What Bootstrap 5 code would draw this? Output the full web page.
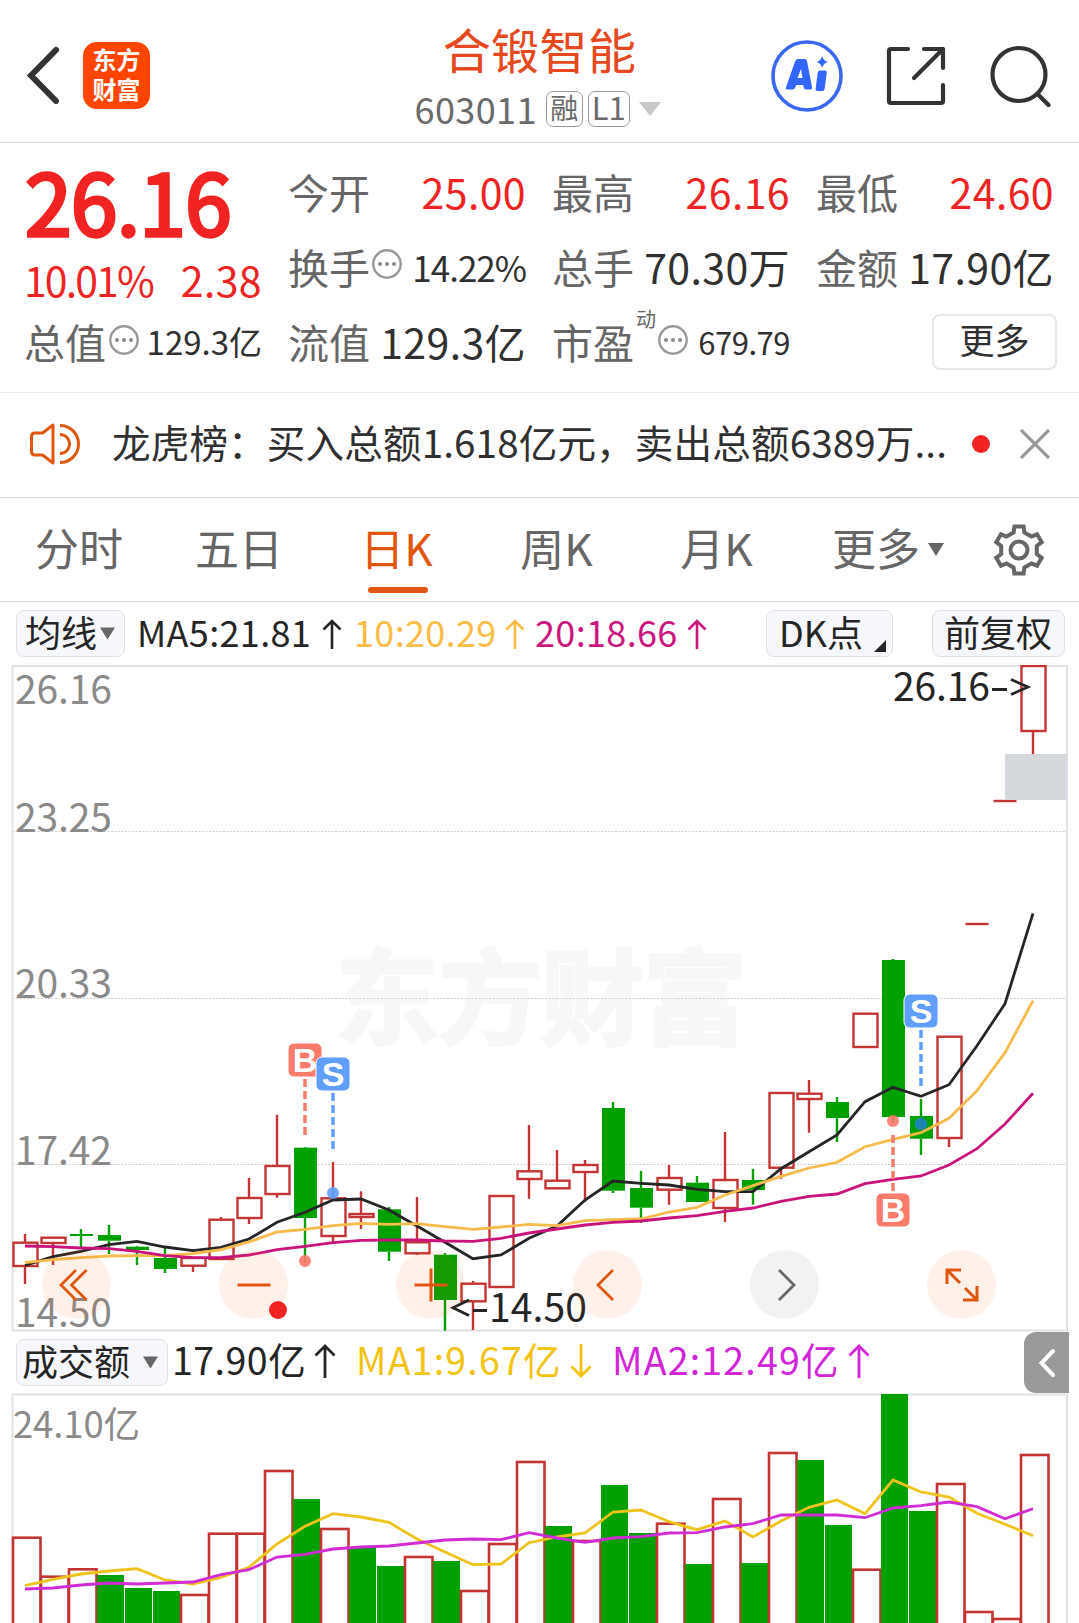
<!DOCTYPE html>
<html lang="zh-CN">
<head>
<meta charset="utf-8">
<meta name="viewport" content="width=device-width, initial-scale=1">
<title>合锻智能 603011</title>
<link rel="stylesheet" href="https://cdn.jsdelivr.net/npm/bootstrap@5.3.0/dist/css/bootstrap.min.css">
<script src="https://cdn.jsdelivr.net/npm/bootstrap@5.3.0/dist/js/bootstrap.bundle.min.js"></script>
<style>
  body { width: 1079px; height: 1623px; overflow: hidden; background: #fff; color: #303030;
         font-family: "Noto Sans CJK SC", "Noto Sans", sans-serif; font-size: 41px; line-height: 1; }
  svg { display: block; flex: none; }
  .up { color: #ee2424; }
  .rule { border-bottom: 1px solid #d8d8d8; }

  .topbar { height: 143px; padding: 0 26px; display: grid; grid-template-columns: 1fr auto 1fr; }
  .logo { width: 67px; height: 67px; border-radius: 14px; background: #ff4500; color: #fff; margin-left: 23px;
          font-size: 24px; font-weight: 700; line-height: 30px; padding-top: 2px; }
  .stock-name { font-size: 48px; line-height: 60px; letter-spacing: .4px; color: #e84820; margin-top: 18px; }
  .code-line { font-size: 36px; line-height: 40px; color: #6a6a6a; margin-top: 11px; }
  .code-no { letter-spacing: .4px; position: relative; top: -1px; }
  .tagbox { border: 1.5px solid #999; border-radius: 7px; height: 36px; font-size: 28px; line-height: 30px; text-align: center; }

  .quote { height: 250px; padding: 11px 25px 0 24px; grid-template-columns: repeat(4, 238px);
           grid-template-rows: repeat(3, 75px); column-gap: 26px; border-bottom: 1px solid #ececec; }
  .cell { display: flex; justify-content: space-between; align-items: center; white-space: nowrap; }
  .lbl { color: #666; display: flex; align-items: center; }
  .price-cell { grid-row: span 2; }
  .price { font-size: 84px; line-height: 92px; letter-spacing: -.8px; -webkit-text-stroke: 3.4px #f22323; color: #f22323; padding-left: 1px; }
  .change { font-size: 41px; line-height: 50px; margin-top: 8px; }
  .pct { letter-spacing: -1.9px; }
  .num { letter-spacing: .4px; }
  .v35 { font-size: 35px; letter-spacing: -1px; } .v33 { font-size: 33px; } .v31 { font-size: 31px; letter-spacing: -.5px; }
  .dyn { font-size: 20px; align-self: flex-start; margin: -12px 5px 0 2px; }
  .more { width: 125px; height: 56px; border: 2px solid #e6e7ea; border-radius: 8px; font-size: 35px; line-height: 46px;
          text-align: center; margin: 0 -3px 0 auto; }

  .news { height: 105px; padding: 0 29px 0 29px; }
  .news svg, .news .dot { position: relative; top: -1px; }
  .news-text { font-size: 38.6px; letter-spacing: .13px; margin: -7px 0 0 31px; width: 840px; white-space: nowrap; }
  .dot { width: 18px; height: 18px; border-radius: 50%; background: #f12323; flex: none; }

  .ktabs { height: 104px; font-size: 44px; color: #666; }
  .ktabs .item { width: 160px; height: 103px; line-height: 99px; text-align: center; display: block; padding-right: 2px; }
  .ktabs .item:nth-child(n+3) { padding-right: 7px; }
  .ktabs .item:last-of-type { padding-right: 2px; }
  .ktabs .on { color: #e2570f; position: relative; }
  .ktabs .on::after { content: ""; position: absolute; left: 48px; bottom: 8px; width: 60px; height: 6px; border-radius: 3px; background: #e2570f; }

  .ind { height: 63px; font-size: 36px; white-space: nowrap; padding: 0 14px 0 16px; color: #252525; }
  .chip { height: 47px; border: 1.5px solid #dfe1e5; border-radius: 8px; background: #f6f7fa; color: #252525;
          font-size: 36px; display: flex; align-items: center; position: relative; top: -.5px; flex: none; }
  .chip span { position: relative; top: -2.5px; }
  .ind .t { position: relative; top: -3px; letter-spacing: .35px; }
  .vol-head { height: 61px; font-size: 37.5px; white-space: nowrap; padding: 0 10px 0 16px; color: #252525; }
  .vol-head .t { position: relative; top: -4px; }
  .vol-head .wide { letter-spacing: 1.2px; }
  .vol-head > svg { position: relative; top: -2px; }
  .pull { width: 45px; height: 61px; border-radius: 12px 0 0 12px; background: #999; }

  .chart { position: relative; height: 667px; }
  .controls { position: absolute; left: 42px; top: 585px; width: 954px; display: flex; justify-content: space-between; }
  .round { width: 69px; height: 69px; border-radius: 50%; background: rgba(255,105,20,.09); display: flex; align-items: center; justify-content: center; position: relative; }
  .round.off { background: #f2f2f2; }
  .round .dot { position: absolute; left: 50px; top: 51px; }
</style>
</head>
<body>

<header class="topbar rule">
  <div class="d-flex align-items-center" style="padding-top:8px">
    <svg width="34" height="60" viewBox="0 0 34 60" fill="none" stroke="#333" stroke-width="6" stroke-linecap="round" stroke-linejoin="miter"><path d="M30 5 5 30.500 30 56"/></svg>
    <div class="logo text-center">东方<br>财富</div>
  </div>
  <div class="text-center" style="width:250px">
    <div class="stock-name">合锻智能</div>
    <div class="code-line d-flex align-items-center">
      <span class="code-no">603011</span>
      <span class="tagbox" style="width:37px;margin-left:9px">融</span>
      <span class="tagbox" style="width:42px;margin-left:5px;font-size:31px">L1</span>
      <svg class="ms-2" width="24" height="16" viewBox="0 0 24 16"><path d="M1 1h22L12 15z" fill="#c9c9c9"/></svg>
    </div>
  </div>
  <div class="d-flex align-items-center justify-content-end" style="padding:9px 2px 0 0">
    <svg width="72" height="72" viewBox="0 0 72 72"><circle cx="36" cy="36" r="34" fill="none" stroke="#3a68f2" stroke-width="3.600"/>
      <path fill="#3366ff" fill-rule="evenodd" d="M26.500 19h7q2 0 2.500 2l5 26q.5 2.500-2 2.500h-4q-2 0-2.300-2l-.4-2.500h-7l-1.200 2.700q-.8 1.800-2.500 1.800h-5q-2.500 0-1.500-2.500l9-25.500q.7-2.500 2.400-2.500zM30 29l-3.500 9h5zM47 30.500h7q2 0 1.700 2l-2 16q-.4 2.500-2.400 2.500h-5q-2 0-1.700-2l2-16q.2-2.500 2.400-2.500zM51 16q1.500 5 6 6-4.500 1-6 6-1-5-5.500-6 4.500-1 5.500-6z"/></svg>
    <svg style="margin-left:43px" width="60" height="60" viewBox="0 0 60 60" fill="none" stroke="#333" stroke-width="4.200" stroke-linecap="round" stroke-linejoin="round"><path d="M22 3H5q-2 0-2 2v50q0 2 2 2h50q2 0 2-2V39M38 3h19v19M57 3 28 32"/></svg>
    <svg style="margin-left:43px" width="62" height="62" viewBox="0 0 62 62" fill="none" stroke="#333" stroke-width="4.200" stroke-linecap="round"><circle cx="30" cy="29.500" r="26.500"/><path d="m48.500 49 11 11"/></svg>
  </div>
</header>

<section class="quote d-grid">
  <div class="price-cell up">
    <div class="price">26.16</div>
    <div class="change d-flex justify-content-between"><span class="pct">10.01%</span><span class="num">2.38</span></div>
  </div>
  <div class="cell"><span class="lbl">今开</span><span class="up num">25.00</span></div>
  <div class="cell"><span class="lbl">最高</span><span class="up num">26.16</span></div>
  <div class="cell"><span class="lbl">最低</span><span class="up num">24.60</span></div>
  <div class="cell"><span class="lbl">换手<svg width="30" height="30" viewBox="0 0 30 30" style="margin:-5px 0 0 2px"><circle cx="15" cy="15" r="13.700" fill="none" stroke="#999" stroke-width="2.400"/><g fill="#8a8a8a"><circle cx="8" cy="15" r="2"/><circle cx="15" cy="15" r="2"/><circle cx="22" cy="15" r="2"/></g></svg></span><span class="v35">14.22%</span></div>
  <div class="cell"><span class="lbl">总手</span><span class="num">70.30万</span></div>
  <div class="cell"><span class="lbl">金额</span><span class="num">17.90亿</span></div>
  <div class="cell"><span class="lbl">总值<svg width="30" height="30" viewBox="0 0 30 30" style="margin:-3px 0 0 3px"><circle cx="15" cy="15" r="13.700" fill="none" stroke="#999" stroke-width="2.400"/><g fill="#8a8a8a"><circle cx="8" cy="15" r="2"/><circle cx="15" cy="15" r="2"/><circle cx="22" cy="15" r="2"/></g></svg></span><span class="v33">129.3亿</span></div>
  <div class="cell"><span class="lbl">流值</span><span class="num">129.3亿</span></div>
  <div class="cell"><span class="lbl">市盈<span class="dyn">动</span><svg width="30" height="30" viewBox="0 0 30 30" style="margin:-3px 0 0 -3px"><circle cx="15" cy="15" r="13.700" fill="none" stroke="#999" stroke-width="2.400"/><g fill="#8a8a8a"><circle cx="8" cy="15" r="2"/><circle cx="15" cy="15" r="2"/><circle cx="22" cy="15" r="2"/></g></svg></span><span class="v31">679.79</span></div>
  <div class="cell"><div class="more">更多</div></div>
</section>

<section class="news rule d-flex align-items-center">
  <svg width="52" height="44" viewBox="0 0 52 44" fill="none" stroke="#e2570f" stroke-width="3"><path d="M24 3v38L13.500 33H6q-3.500 0-3.500-3.500v-15Q2.500 11 6 11h7.500z" stroke-linejoin="round"/><path d="M31 3.500a18.500 18.500 0 0 1 0 37M31 12.500a9.500 9.500 0 0 1 0 19"/></svg>
  <span class="news-text">龙虎榜：买入总额1.618亿元，卖出总额6389万...</span>
  <span class="dot" style="margin-left:20px"></span>
  <svg class="ms-auto" width="30" height="30" viewBox="0 0 30 30" stroke="#999" stroke-width="3.200"><path d="M1 1 29 29M29 1 1 29"/></svg>
</section>

<nav class="ktabs rule d-flex">
  <span class="item">分时</span><span class="item">五日</span><span class="item on">日K</span><span class="item">周K</span><span class="item">月K</span>
  <span class="item d-flex justify-content-center" style="width:178px">更多<svg width="16" height="13" viewBox="0 0 16 13" style="margin:45px 0 0 8px"><path d="M0 0h16L8 13z" fill="#666"/></svg></span>
  <svg id="gear" class="align-self-center" style="margin-left:14px" width="54" height="54" viewBox="-27 -27 54 54" fill="none" stroke="#666" stroke-width="4"><circle r="8.500"/></svg>
</nav>

<div class="ind d-flex align-items-center">
  <div class="chip" style="width:109px;padding-left:8px"><span>均线</span><svg width="15" height="13" viewBox="0 0 16 13" style="margin-left:3px"><path d="M0 0h16L8 13z" fill="#666"/></svg></div>
  <span class="t" style="margin-left:12px;width:185px">MA5:21.81</span>
  <svg width="20" height="32" viewBox="0 0 20 32" fill="none" stroke="#252525" stroke-width="2.600"><path d="M10 31V3M1.500 11.500 10 3l8.500 8.500"/></svg>
  <span class="t" style="margin-left:12px;width:151px;color:#fbbc45">10:20.29</span>
  <svg width="20" height="32" viewBox="0 0 20 32" fill="none" stroke="#fbbc45" stroke-width="2.600"><path d="M10 31V3M1.500 11.500 10 3l8.500 8.500"/></svg>
  <span class="t" style="margin-left:10px;width:152px;color:#cc167f">20:18.66</span>
  <svg width="20" height="32" viewBox="0 0 20 32" fill="none" stroke="#cc167f" stroke-width="2.600"><path d="M10 31V3M1.500 11.500 10 3l8.500 8.500"/></svg>
  <div class="chip ms-auto" style="width:127px;padding-left:12px"><span>DK点</span><svg width="12" height="12" viewBox="0 0 12 12" style="margin:25px 0 0 11px"><path d="M12 0v12H0z" fill="#252525"/></svg></div>
  <div class="chip" style="width:133px;margin-left:39px;padding-left:11px"><span>前复权</span></div>
</div>

<section class="chart">
  <svg id="kline" width="1079" height="667" viewBox="0 665 1079 667"></svg>
  <div class="controls">
    <div class="round"><svg width="32" height="34" viewBox="0 0 32 34" fill="none" stroke="#e2570f" stroke-width="2.800" style="margin-right:5px"><path d="M18 2 3 17l15 15M28.500 2l-15 15 15 15"/></svg></div>
    <div class="round"><svg width="34" height="34" viewBox="0 0 34 34" stroke="#e2570f" stroke-width="3"><path d="M.5 17h33"/></svg><span class="dot"></span></div>
    <div class="round"><svg width="34" height="34" viewBox="0 0 34 34" stroke="#e2570f" stroke-width="3"><path d="M.5 17h33M17 .5v33"/></svg></div>
    <div class="round"><svg width="20" height="34" viewBox="0 0 20 34" fill="none" stroke="#e2570f" stroke-width="2.800" style="margin-right:5px"><path d="M18 2 3 17l15 15"/></svg></div>
    <div class="round off"><svg width="20" height="34" viewBox="0 0 20 34" fill="none" stroke="#666" stroke-width="2.800" style="margin-left:4px"><path d="m2 2 15 15L2 32"/></svg></div>
    <div class="round"><svg width="34" height="34" viewBox="0 0 34 34" fill="none" stroke="#e2570f" stroke-width="3"><path d="M2 16V2h14M2 2l13 13M32 18v14H18M32 32 20 20"/></svg></div>
  </div>
</section>

<div class="vol-head d-flex align-items-center">
  <div class="chip" style="width:152px;padding-left:5px"><span>成交额</span><svg width="15" height="13" viewBox="0 0 16 13" style="margin-left:13px"><path d="M0 0h16L8 13z" fill="#666"/></svg></div>
  <span class="t" style="margin-left:4px;width:142px;letter-spacing:.5px">17.90亿</span>
  <svg width="22" height="36" viewBox="0 0 22 36" fill="none" stroke="#252525" stroke-width="2.800"><path d="M11 35V3M1.500 12.500 11 3l9.500 9.500"/></svg>
  <span class="t wide" style="margin-left:20px;width:214px;color:#f2c311">MA1:9.67亿</span>
  <svg width="22" height="36" viewBox="0 0 22 36" fill="none" stroke="#f2c311" stroke-width="2.800"><path d="M11 1v32M1.500 23.500 11 33l9.500-9.500"/></svg>
  <span class="t wide" style="margin-left:20px;width:236px;color:#d224d8">MA2:12.49亿</span>
  <svg width="22" height="36" viewBox="0 0 22 36" fill="none" stroke="#d224d8" stroke-width="2.800"><path d="M11 35V3M1.500 12.500 11 3l9.500 9.500"/></svg>
  <div class="pull ms-auto d-flex align-items-center justify-content-center"><svg width="18" height="30" viewBox="0 0 18 30" fill="none" stroke="#fff" stroke-width="4" stroke-linecap="round"><path d="M15 3 3.500 15 15 27"/></svg></div>
</div>

<svg id="volume" width="1079" height="230" viewBox="0 1393 1079 230"></svg>

<script>
const X = i => 25 + 28 * i, VX = i => 26 + 28 * i;
const RED = '#c43432', GREEN = '#00a000';
// each row: direction, high, body top, body bottom, low
const candles = [
 ['r',1234,1242.7,1266,1284],['r',1238,1237.7,1243,1265],['g',1229,1234,1236,1247],['g',1225,1235,1240.7,1254],
 ['g',1246,1246.7,1250,1265],['g',1248,1258,1269,1273],['r',1258,1258,1265.7,1272],['r',1217,1219.7,1259,1259],
 ['r',1178,1198,1218,1224],['r',1114.7,1166,1194,1197.7],['g',1147,1147.7,1218,1263],['r',1162,1198.3,1236,1243.7],
 ['r',1191.3,1214,1217,1229],['g',1207,1209.3,1251.7,1261],['r',1197,1242.3,1253.3,1255],['g',1253,1254.7,1300,1330.7],
 ['r',1281,1283.7,1301.3,1330],['r',1196,1196,1287,1287],['r',1125,1171.3,1179,1198.7],['r',1150,1180.7,1188.3,1188.3],
 ['r',1160,1165,1172,1202],['g',1102,1108,1190.7,1193],['g',1171,1188,1207.7,1223],['r',1165,1178,1189.7,1204.7],
 ['g',1176,1182.7,1202,1202],['r',1132,1180,1208,1222],['g',1169,1180,1190,1204.7],['r',1093,1093,1167.7,1178.7],
 ['r',1080,1093.7,1099,1132.7],['g',1097,1102,1118,1142],['r',1013.7,1013.7,1047,1047],['g',959,960,1117,1123],
 ['g',1099,1116,1138.7,1155],['r',1036.7,1036.7,1138,1147],['r',924,924,924,924],['r',801,801,801,801],['r',666,666,731,754]];
const ma5 = [1265.3,1256.7,1251.3,1244.7,1241.3,1247,1250.7,1247.3,1239,1222.3,1212.3,1200,1199,1210,1226,1242.3,1258.7,1255,1238.3,1226,1200,1181,1183.3,1185,1189.3,1191.7,1191.7,1168.7,1151.7,1135,1101.7,1087.3,1096.3,1084.7,1045.7,1003.7,913.3];
const ma10 = [1262.7,1259.7,1257.7,1256,1255.7,1255.7,1253.7,1249.7,1242,1232,1229.3,1225.7,1223.3,1224.3,1223.7,1226.7,1229.3,1227,1224.3,1225.7,1220.7,1219.7,1219,1212,1207.3,1195,1185.7,1176.3,1168,1162.3,1146.7,1139.3,1132.7,1118.3,1090.7,1052.7,1000.7];
const ma20 = [1246,1246.7,1248,1248.7,1251.3,1255.7,1257.7,1257.7,1255,1249.7,1246.3,1242.7,1240.3,1240,1240,1241,1241.3,1238.3,1233,1229,1225,1222.3,1221,1218,1215.7,1211.3,1208,1201.3,1196.3,1194,1183.7,1179.3,1176,1165,1148.7,1124,1093.3];
const line = (a, c, f) => `<polyline fill="none" stroke="${c}" stroke-width="2.800" points="${a.map((y, i) => f(i) + ',' + y).join(' ')}"/>`;
const label = (x, y, s, len, c, fs) => `<text x="${x}" y="${y}" font-size="${fs}" fill="${c}" textLength="${len}">${s}</text>`;

let k = `<text x="335" y="1037" font-size="104" font-weight="700" fill="#f7f7f7" stroke="#f7f7f7" stroke-width="3" textLength="412">东方财富</text>`;
for (const y of [831.5, 998.5, 1164.5]) k += `<path d="M13 ${y}H1067" stroke="#cfcfcf" stroke-width="1" stroke-dasharray="2 1.500"/>`;
k += `<path d="M12.500 1331V666H1067V1330.500H12" fill="none" stroke="#e2e2e2" stroke-width="2"/>`;
candles.forEach(([d, h, t, b, l], i) => {
  const x = X(i), c = d === 'r' ? RED : GREEN;
  if (h < t) k += `<path d="M${x} ${h}V${t}" stroke="${c}" stroke-width="2.400"/>`;
  if (l > b) k += `<path d="M${x} ${b}V${l}" stroke="${c}" stroke-width="2.400"/>`;
  if (t === b) k += `<path d="M${x - 11.5} ${t}h23" stroke="${c}" stroke-width="2.400"/>`;
  else if (d === 'r') k += `<rect x="${x - 11.5}" y="${t}" width="24" height="${b - t}" fill="none" stroke="${c}" stroke-width="2.400"/>`;
  else k += `<rect x="${x - 11}" y="${t}" width="23" height="${b - t}" fill="${c}"/>`;
});
k += `<rect x="1005" y="754" width="62" height="46" fill="#d4d7dc"/>`;
k += line(ma5, '#252525', X) + line(ma10, '#f7bb4b', X) + line(ma20, '#c8137c', X);
[[704, '26.16'], [832, '23.25'], [998, '20.33'], [1165, '17.42'], [1327, '14.50']].forEach(([y, s]) => k += label(15, y, s, 97, '#8a8a8a', 39));
k += label(893, 701, '26.16', 97, '#252525', 39) + label(489, 1322, '14.50', 98, '#252525', 39);
k += `<path d="M992 689.500h15M1011 679.500l17 7.500-17 7.500M487 1310.500h-14M469 1300l-16 7.700 16 7.700" fill="none" stroke="#252525" stroke-width="2.800"/>`;
const mark = (x, y, s, c, d0, dot) => `<path d="M${x} ${d0}v56" stroke="${c}" stroke-width="3.500" stroke-dasharray="8 4"/><circle cx="${x}" cy="${dot}" r="6" fill="${c}" fill-opacity=".9"/>
 <rect x="${x - 17}" y="${y - 17}" width="34" height="34" rx="6" fill="${c}" stroke="#fff" stroke-width="1"/><text x="${x}" y="${y + 12}" font-family="Liberation Sans" font-weight="700" font-size="34" text-anchor="middle" fill="#fff">${s}</text>`;
k += mark(305, 1060, 'B', '#fa7a6b', 1079, 1261) + mark(333, 1074, 'S', '#5f9ffb', 1093, 1193)
   + mark(893, 1210, 'B', '#fa7a6b', 1135, 1121) + mark(921, 1011, 'S', '#5f9ffb', 1030, 1124);
k += `<circle cx="921" cy="1124" r="6" fill="#1c84b4"/>`;
document.getElementById('kline').innerHTML = k;

// turnover bars: direction, top edge
const bars = ['r1537.7','r1576.7','r1569.3','g1575','g1588','g1591','r1595','r1533.7','r1533.7','r1471','g1499','r1529','g1548','g1566','r1557','g1561','r1591','r1544','r1462','g1526','r1541','g1485','g1533','r1523.7','g1564','r1499','g1563','r1453','g1460','g1525','r1569.7','g1394','g1511','r1484','r1612','r1619','r1455'];
const v1 = [1585.7,1579.3,1574,1571,1568.7,1580,1584,1577.3,1567.3,1544,1526.3,1513.7,1517,1522.3,1539,1552,1564.7,1564,1542.7,1537,1533,1512,1510,1521.7,1529.7,1521,1537,1521,1507.3,1500,1513.7,1480,1492,1497,1513.3,1524.3,1535.7];
const v2 = [1589,1588,1585,1583,1584,1583,1582,1574.7,1569.7,1557,1554.3,1549,1547,1546,1543,1540,1539,1539.7,1532.7,1538,1542.3,1538,1536.7,1533,1532.7,1527,1523.7,1515,1515,1515,1517.7,1508,1505.7,1502,1506.7,1518.7,1508.7];
let v = `<path d="M12.500 1623V1394.500H1067V1623" fill="none" stroke="#e2e2e2" stroke-width="2"/>` + label(13, 1438, '24.10亿', 127, '#8a8a8a', 36.5);
bars.forEach((s, i) => {
  const y = +s.slice(1), x = VX(i);
  v += s[0] === 'r' ? `<rect x="${x - 13}" y="${y}" width="27.500" height="260" fill="none" stroke="${RED}" stroke-width="2.600"/>`
                    : `<rect x="${x - 13}" y="${y}" width="27" height="260" fill="${GREEN}"/>`;
});
v += line(v1, '#efc31c', X) + line(v2, '#d12bd6', X);
document.getElementById('volume').innerHTML = v;

// six-toothed settings gear
const P = (r, a) => (r * Math.sin(a * Math.PI / 180)).toFixed(1) + ' ' + (-r * Math.cos(a * Math.PI / 180)).toFixed(1);
const pts = [];
for (let a = 0; a < 360; a += 60) pts.push(P(24, a - 11), P(24, a + 11), P(18.3, a + 17), P(18.3, a + 43));
document.getElementById('gear').innerHTML += `<path d="M${pts.join('L')}Z"/>`;
</script>
</body>
</html>
